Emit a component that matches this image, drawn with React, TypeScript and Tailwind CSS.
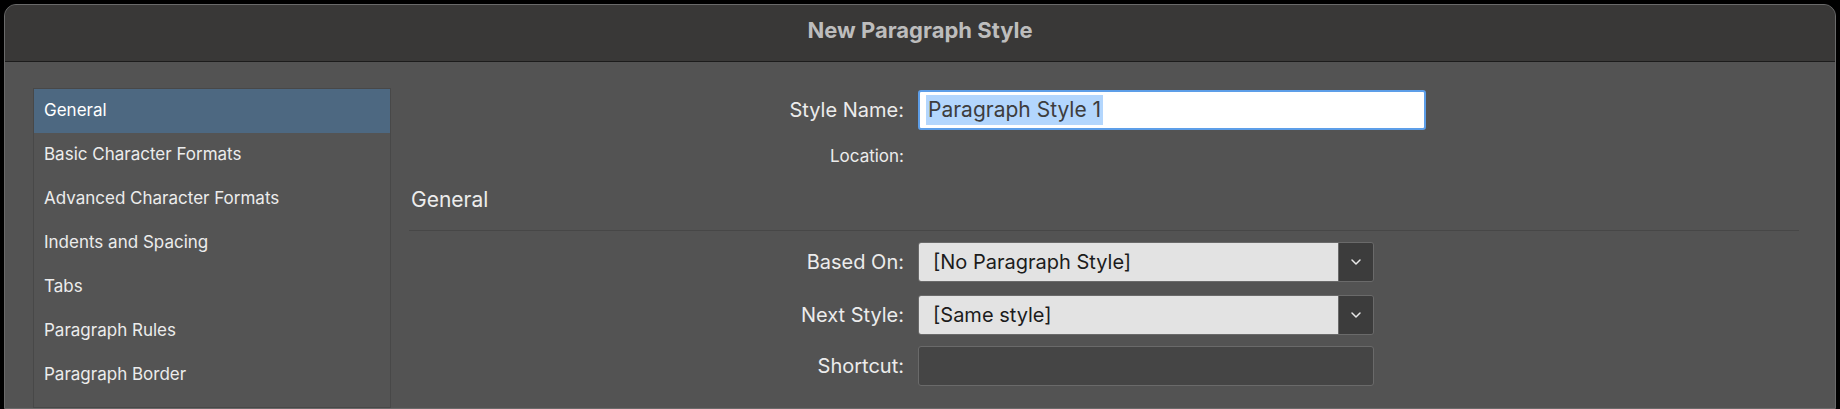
const items = [
  "General",
  "Basic Character Formats",
  "Advanced Character Formats",
  "Indents and Spacing",
  "Tabs",
  "Paragraph Rules",
  "Paragraph Border",
];

const Chevron = () => (
  <svg width="16" height="16" viewBox="0 0 16 16" fill="none">
    <path d="M4 6 L8 10 L12 6" stroke="#e8e8e8" strokeWidth="1.5" strokeLinecap="round" strokeLinejoin="round" />
  </svg>
);

const Select = ({ value }: { value: string }) => (
  <div className="flex h-[40px] w-[456px] rounded-[3px] border border-[#6a6a6a] overflow-hidden">
    <div className="flex-1 bg-[#e3e3e3] flex items-center pl-[14px] text-[20px] text-[#1c1c1c]">{value}</div>
    <div className="w-[35px] bg-[#3c3c3c] border-l border-[#6a6a6a] flex items-center justify-center">
      <Chevron />
    </div>
  </div>
);

const Label = ({ children }: { children: string }) => (
  <div className="w-[509px] text-right pr-[14px] text-[20px] text-[#ececec]">{children}</div>
);

export default function App() {
  return (
    <div className="w-[1840px] h-[409px] bg-black pt-[4px] px-[4px] overflow-hidden" style={{ fontFamily: "Inter, 'Noto Sans', sans-serif" }}>
      <div className="h-full rounded-t-[12px] bg-[#535353] border border-[#6a6a6a] overflow-hidden flex flex-col">
        <div className="h-[57px] bg-[#393837] border-b border-[#1c1c1c] flex items-center justify-center pb-[6px] text-[22px] font-bold text-[#bdbdbd]">
          New Paragraph Style
        </div>
        <div className="flex flex-1 pt-[26px] pl-[28px]">
          <div className="w-[358px] bg-[#545454] border border-[#484848] flex flex-col">
            {items.map((it, i) => (
              <div key={it} className={`h-[44px] flex items-center pl-[10px] text-[17px] ${i === 0 ? "bg-[#4d6881] text-white" : "text-[#ececec]"}`}>
                {it}
              </div>
            ))}
          </div>
          <div className="flex-1 pl-[18px] pr-[36px]">
            <div className="flex items-center h-[40px] mt-[2px]">
              <Label>Style Name:</Label>
              <div className="w-[508px] h-[40px] bg-white border-2 border-[#5d9ee8] rounded-[3px] flex items-center pl-[6px]">
                <span className="bg-[#b3d6fd] text-[#3d3d3d] text-[21px] px-[2px] leading-[30px]">Paragraph Style 1</span>
              </div>
            </div>
            <div className="flex items-center h-[30px] mt-[12px]">
              <div className="w-[509px] text-right pr-[14px] text-[17px] text-[#ececec]">Location:</div>
            </div>
            <div className="text-[21px] text-[#ececec] mt-[12px] pl-[2px]">General</div>
            <div className="border-b border-[#474747] mt-[14px]" />
            <div className="flex items-center mt-[11px]">
              <Label>Based On:</Label>
              <Select value="[No Paragraph Style]" />
            </div>
            <div className="flex items-center mt-[13px]">
              <Label>Next Style:</Label>
              <Select value="[Same style]" />
            </div>
            <div className="flex items-center mt-[11px]">
              <Label>Shortcut:</Label>
              <div className="w-[456px] h-[40px] bg-[#454545] border border-[#6a6a6a] rounded-[3px]" />
            </div>
          </div>
        </div>
      </div>
    </div>
  );
}
